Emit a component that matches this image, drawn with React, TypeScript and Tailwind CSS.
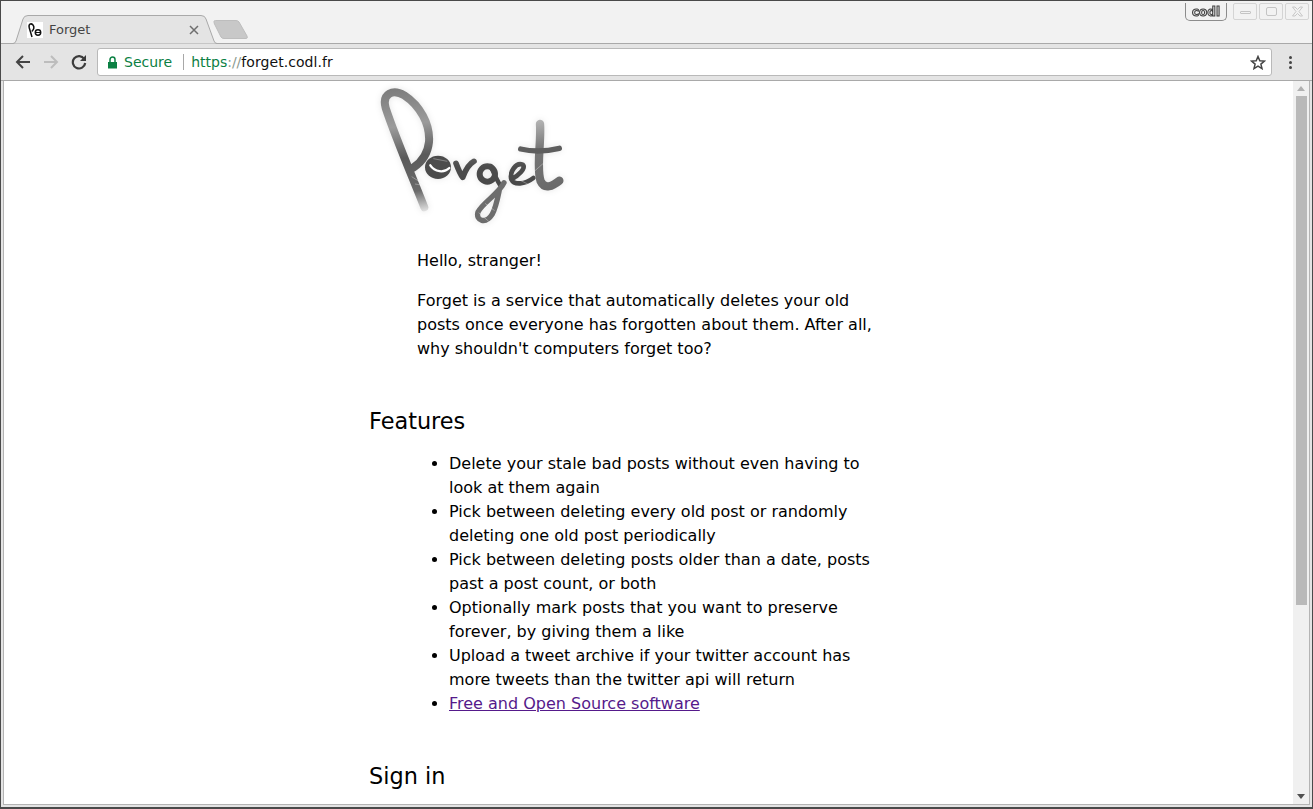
import React from "react";

function Logo() {
  return (
    <svg width="210" height="149" viewBox="0 3 630 447" className="block ml-px drop-shadow-[0_0_3px_rgba(0,0,0,0.1)]">
      <defs>
        <linearGradient id="lg" x1="0" y1="180" x2="0" y2="450" gradientUnits="userSpaceOnUse">
          <stop offset="0" stopColor="#7a7a7a" />
          <stop offset="0.3" stopColor="#4c4c4c" />
          <stop offset="0.55" stopColor="#484848" />
          <stop offset="0.8" stopColor="#6f6f6f" />
          <stop offset="1" stopColor="#8a8a8a" />
        </linearGradient>
        <linearGradient id="lp" x1="100" y1="20" x2="160" y2="400" gradientUnits="userSpaceOnUse">
          <stop offset="0" stopColor="#7c7c7c" />
          <stop offset="0.3" stopColor="#9b9b9b" />
          <stop offset="0.55" stopColor="#5a5a5a" />
          <stop offset="0.82" stopColor="#6a6a6a" />
          <stop offset="1" stopColor="#ececec" />
        </linearGradient>
        <linearGradient id="lt" x1="510" y1="120" x2="540" y2="325" gradientUnits="userSpaceOnUse">
          <stop offset="0" stopColor="#b4b4b4" />
          <stop offset="0.4" stopColor="#777777" />
          <stop offset="1" stopColor="#6a6a6a" />
        </linearGradient>
      </defs>
      <g fill="none" stroke="url(#lg)" strokeLinecap="round" strokeLinejoin="round">
        <path d="M163 382 C133 305 75 170 47 84 C35 40 69 26 103 46 C149 76 181 132 177 186 C173 222 155 246 131 262" stroke="url(#lp)" strokeWidth="24" />
        <ellipse cx="204" cy="262" rx="39" ry="35" fill="#4c4c4c" stroke="none" />
        <path d="M181 256 C194 276 222 280 238 264" stroke="#ffffff" strokeWidth="7" />
        <path d="M258 250 C264 266 270 282 278 292 C286 272 296 252 312 244" strokeWidth="17" />
        <circle cx="352" cy="282" r="23" strokeWidth="18" />
        <path d="M362 258 C372 280 380 300 392 318" strokeWidth="13" />
        <path d="M402 308 C388 340 340 366 324 396 C316 424 348 432 366 404 C378 382 382 360 388 330" strokeWidth="16" stroke="#6d6d6d" />
        <path d="M424 298 C444 288 470 264 458 254 C438 246 418 276 424 298 C432 316 464 314 490 294" strokeWidth="14" />
        <path d="M510 132 C514 190 498 265 512 304 C524 330 548 318 568 302" strokeWidth="25" stroke="url(#lt)" />
        <path d="M452 207 C490 216 530 214 568 205" strokeWidth="16" stroke="#5e5e5e" />
      </g>
      <g fill="none" stroke="#ffffff" strokeWidth="1.2" opacity="0.8">
        <path d="M87 146 L119 196 M125 290 L175 322 M135 312 L153 315 M190 236 L232 244 M226 296 L262 290 M345 370 L374 392 M326 398 L356 424 M440 296 L486 318 M486 280 L520 250" />
      </g>
    </svg>
  );
}

const items = [
  "Delete your stale bad posts without even having to look at them again",
  "Pick between deleting every old post or randomly deleting one old post periodically",
  "Pick between deleting posts older than a date, posts past a post count, or both",
  "Optionally mark posts that you want to preserve forever, by giving them a like",
  "Upload a tweet archive if your twitter account has more tweets than the twitter api will return",
];

function Ctl({ children }: { children: React.ReactNode }) {
  return (
    <div className="w-[24px] h-[17px] border border-[#d4d4d4] rounded-[2px] flex items-center justify-center">
      {children}
    </div>
  );
}

export default function App() {
  return (
    <div className="w-[1313px] h-[809px] overflow-hidden flex flex-col bg-[#e4e4e4] border border-b-[2px] border-[#4a4a4a] font-['DejaVu_Sans',sans-serif] text-black">
      {/* title strip */}
      <div className="h-[43px] shrink-0 bg-[#f2f2f2] flex justify-between pr-[2px] border-b border-[#a9a9a9]">
        <div className="flex items-end pl-[9px]">
          <div className="relative w-[208px] h-[29px] -mb-px flex items-center pl-[17px] pr-[19px]">
            <svg width="208" height="29" viewBox="0 0 208 29" className="absolute left-0 top-0">
              <path d="M0 28.500 H3 Q5 28.500 6 26 L13 4 Q14 .5 18 .5 H191 Q195 .5 196 4 L204 26 Q205 28.500 207 28.500 H208" fill="#e4e4e4" stroke="#a9a9a9" />
            </svg>
            <div className="relative w-4 h-4 bg-white shrink-0">
              <svg width="16" height="16" viewBox="0 0 16 16" fill="none" stroke="#111" strokeWidth="1.500">
                <path d="M5 15 L2.300 6 C1.200 2 4 0.800 6 3 C7.500 5 6.800 7.500 4.800 9.500" />
                <circle cx="11" cy="10.500" r="2.700" />
                <path d="M8.500 10.500 H13.500" strokeWidth="1" />
              </svg>
            </div>
            <span className="relative ml-[6px] text-[13px] text-[#444]">Forget</span>
            <svg width="10" height="10" viewBox="0 0 10 10" className="relative ml-auto" stroke="#6e6e6e" strokeWidth="1.500">
              <path d="M1 1 L9 9 M9 1 L1 9" />
            </svg>
          </div>
          <svg width="36" height="20" viewBox="0 0 36 20" className="-ml-[5px] mb-[3px]">
            <path d="M1 1.500 Q1 .5 2.500 .5 H23 Q25 .5 26 2 L34 16 Q35 18.500 33 18.500 H11 Q9 18.500 8 17 L1.500 4 Q1 3 1 1.500 Z" fill="#c8c8c8" stroke="#bdbdbd" />
          </svg>
        </div>
        <div className="flex items-start mt-[2px] mr-[1px]">
          <div className="w-[42px] h-[18px] mr-[6px] border border-t-0 border-[#8c8c8c] rounded-b-[5px] flex items-center justify-center">
            <span className="text-[12px] font-bold leading-none text-[#d8d8d8] [-webkit-text-stroke:1px_#3c3c3c] opacity-99">codl</span>
          </div>
          <div className="flex gap-[2px]">
            <Ctl><div className="w-[11px] h-[3px] border border-[#c4c4c4] rounded-[1px] mt-[2px]" /></Ctl>
            <Ctl><div className="w-[11px] h-[9px] border border-[#c4c4c4] rounded-[2px]" /></Ctl>
            <Ctl>
              <svg width="13" height="11" viewBox="0 0 13 11" fill="none" stroke="#c8c8c8">
                <path d="M1.500 1 H4 L6.500 3.500 L9 1 H11.500 L8 5.500 L11.500 10 H9 L6.500 7.500 L4 10 H1.500 L5 5.500 Z" />
              </svg>
            </Ctl>
          </div>
        </div>
      </div>
      {/* toolbar */}
      <div className="h-[37px] shrink-0 flex items-center pl-[14px] pr-[20px] border-b border-[#a9a9a9]">
        <svg width="16" height="16" viewBox="0 0 16 16" fill="none" stroke="#444" strokeWidth="2" className="shrink-0">
          <path d="M15 8 H2 M8 2 L2 8 L8 14" />
        </svg>
        <svg width="16" height="16" viewBox="0 0 16 16" fill="none" stroke="#bdbdbd" strokeWidth="2" className="ml-[12px] shrink-0">
          <path d="M1 8 H14 M8 2 L14 8 L8 14" />
        </svg>
        <svg width="16" height="16" viewBox="0 0 16 16" fill="none" stroke="#3c3c3c" strokeWidth="2.200" className="ml-[12px] shrink-0">
          <path d="M13.200 4.800 A6.200 6.200 0 1 0 14.200 9" />
          <path d="M15 1 V7 H9 Z" fill="#3c3c3c" stroke="none" />
        </svg>
        <div className="ml-[10px] flex-1 h-[28px] bg-white border border-[#b9b9b9] rounded-[3px] flex items-center pl-[9px] pr-[5px] text-[14px]">
          <svg width="11" height="13" viewBox="0 0 11 13" className="shrink-0">
            <path d="M1 6 H10 V12.500 H1 Z" fill="#0b8043" />
            <path d="M3 6 V3.500 A2.500 2.500 0 0 1 8 3.500 V6" fill="none" stroke="#0b8043" strokeWidth="1.500" />
          </svg>
          <span className="ml-[6px] text-[#0b8043]">Secure</span>
          <div className="w-px h-[16px] bg-[#a8a8a8] ml-[11px] mr-[7px]" />
          <span className="text-[#0b8043]">https</span>
          <span className="text-[#8a9a90]">://</span>
          <span className="text-[#111] tracking-[0.06px]">forget.codl.fr</span>
          <svg width="16" height="15" viewBox="0 0 16 15" fill="none" stroke="#444" strokeWidth="1.500" className="ml-auto">
            <path d="M8 1.500 L9.800 5.800 L14.500 6.100 L10.900 9.100 L12 13.600 L8 11.200 L4 13.600 L5.100 9.100 L1.500 6.100 L6.200 5.800 Z" />
          </svg>
        </div>
        <div className="ml-[17px] flex flex-col gap-[2px]">
          <div className="w-[3px] h-[3px] rounded-full bg-[#444]" />
          <div className="w-[3px] h-[3px] rounded-full bg-[#444]" />
          <div className="w-[3px] h-[3px] rounded-full bg-[#444]" />
        </div>
      </div>
      {/* viewport */}
      <div className="flex-1 min-h-0 flex mx-[2px] mb-[2px] border-l border-b border-[#b4b4b4] border-r bg-white">
        <div className="flex-1 min-w-0 overflow-hidden pl-[365px] text-[16px] leading-[24px]">
          <Logo />
          <div className="pl-[48px] w-[512px] mt-[19px]">
            <p>Hello, stranger!</p>
            <p className="mt-[16px]">
              Forget is a service that automatically deletes your old posts once everyone has forgotten about them. After all, why shouldn't computers forget too?
            </p>
          </div>
          <h2 className="text-[22.4px] leading-[36px] mt-[42px]">Features</h2>
          <ul className="list-disc pl-[80px] w-[512px] mt-[13px]">
            {items.map((t) => (
              <li key={t}>{t}</li>
            ))}
            <li>
              <a href="#" className="underline text-[#551a8b]">Free and Open Source software</a>
            </li>
          </ul>
          <h2 className="text-[22.4px] leading-[36px] mt-[42px]">Sign in</h2>
        </div>
        <div className="w-[16px] shrink-0 bg-[#f0f0f0] flex flex-col items-center">
          <div className="mt-[5px] w-0 h-0 border-x-[4px] border-x-transparent border-b-[5px] border-b-[#b0b0b0]" />
          <div className="mt-[5px] w-[11px] h-[509px] bg-[#b9b9b9]" />
          <div className="mt-auto mb-[5px] w-0 h-0 border-x-[4px] border-x-transparent border-t-[5px] border-t-[#505050]" />
        </div>
      </div>
    </div>
  );
}
